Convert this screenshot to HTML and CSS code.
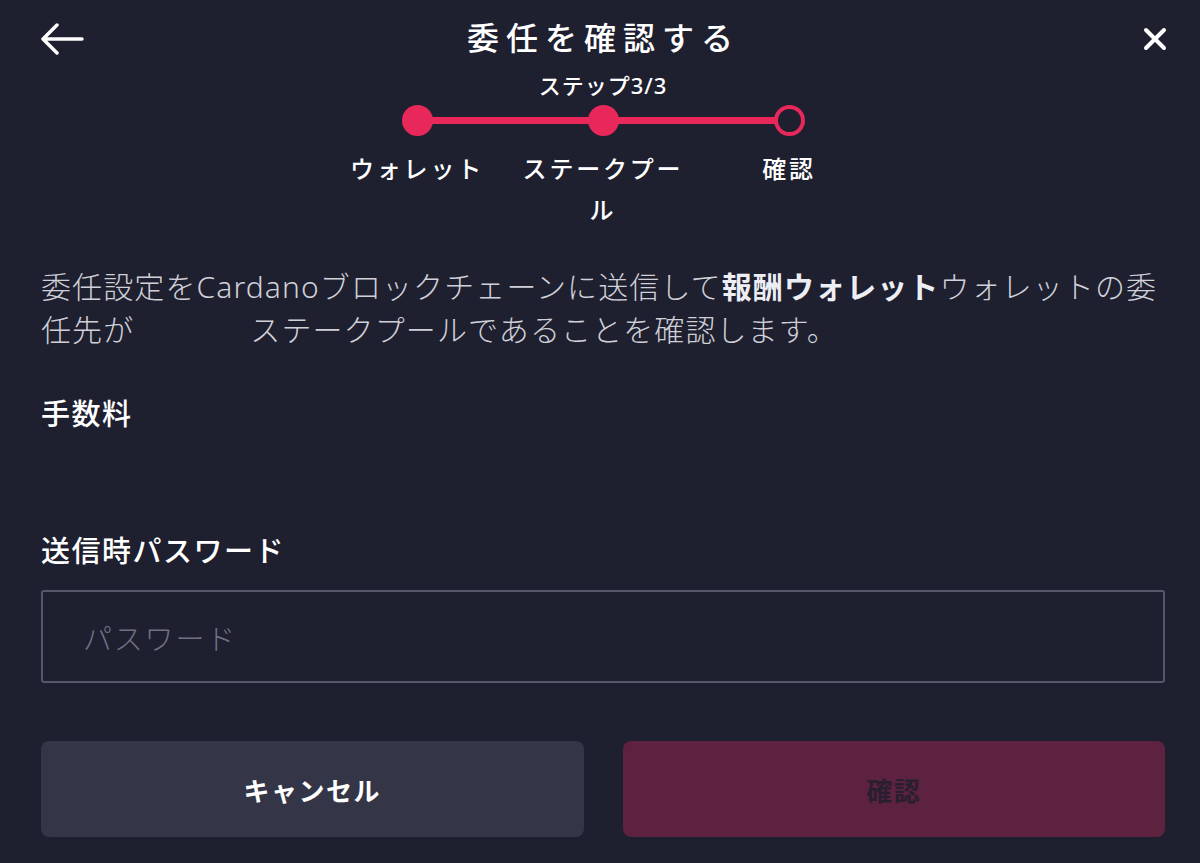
FILE: index.html
```html
<!DOCTYPE html>
<html lang="ja">

<head>
    <meta charset="UTF-8">
    <meta name="viewport" content="width=device-width, initial-scale=1.0">
    <title>委任を確認する</title>
    <link rel="stylesheet" href="styles.css">
</head>

<body>
    <div class="screen">
        <header class="topbar">
            <button class="icon-btn back" aria-label="戻る">
                <svg width="44" height="34" viewBox="0 0 44 34">
                    <path d="M41 17H2M16 3L2 17l14 14" fill="none" stroke="#fff" stroke-width="3.5"
                        stroke-linecap="round" stroke-linejoin="round" />
                </svg>
            </button>
            <h1 class="title">委任を確認する</h1>
            <button class="icon-btn close" aria-label="閉じる">
                <svg width="24" height="24" viewBox="0 0 24 24">
                    <path d="M3 3l18 18M21 3L3 21" fill="none" stroke="#fff" stroke-width="4"
                        stroke-linecap="round" />
                </svg>
            </button>
        </header>

        <div class="step-count">ステップ3/3</div>

        <!-- progress -->
        <ol class="steps">
            <li class="step done">
                <span class="dot"></span>
                <span class="step-label">ウォレット</span>
            </li>
            <li class="step done">
                <span class="dot"></span>
                <span class="step-label">ステークプール</span>
            </li>
            <li class="step current">
                <span class="dot"></span>
                <span class="step-label">確認</span>
            </li>
        </ol>

        <p class="desc">委任設定をCardanoブロックチェーンに送信して<b>報酬ウォレット</b>ウォレットの委任先が<span class="pool-name"></span>ステークプールであることを確認します。</p>

        <h2 class="field-title">手数料</h2>
        <div class="fee"></div>

        <h2 class="field-title">送信時パスワード</h2>
        <input class="password" type="password" placeholder="パスワード">

        <div class="actions">
            <button class="btn cancel">キャンセル</button>
            <button class="btn confirm" disabled>確認</button>
        </div>
    </div>
</body>

</html>
```

FILE: styles.css
```css
body {
    margin: 0;
    background: #1e1f2f;
    color: #fff;
    font-family: "Noto Sans", "Noto Sans CJK JP", sans-serif;
}

.screen {
    padding: 0 35px 0 41px;
}

.topbar {
    display: grid;
    grid-template-columns: 1fr auto 1fr;
    align-items: center;
    height: 78px;
}

.icon-btn {
    background: none;
    border: none;
    padding: 0;
    display: flex;
    cursor: pointer;
}

.back {
    justify-self: start;
}

.close {
    justify-self: end;
    margin-right: -2px;
}

.title {
    margin: 0 0 0 -6px;
    font-size: 32px;
    font-weight: 500;
    letter-spacing: 7px;
    line-height: 1;
    padding-bottom: 2px;
    padding-left: 7px;
}

.step-count {
    text-align: center;
    font-size: 22px;
    font-weight: 500;
    line-height: 26px;
    letter-spacing: 1px;
    margin-top: -6px;
}

.steps {
    list-style: none;
    padding: 0;
    margin: 7px 0 0;
    display: flex;
    justify-content: center;
}

.step {
    width: 186px;
    display: flex;
    flex-direction: column;
    align-items: center;
    position: relative;
}

.step + .step::before {
    content: "";
    position: absolute;
    top: 12px;
    left: -50%;
    width: 100%;
    height: 7px;
    background: #e8285a;
}

.dot {
    width: 31px;
    height: 31px;
    border-radius: 50%;
    background: #e8285a;
    box-sizing: border-box;
    position: relative;
}

.current .dot {
    background: #1e1f2f;
    border: 4px solid #e8285a;
}

.step-label {
    margin-top: 12px;
    font-size: 24px;
    font-weight: 500;
    letter-spacing: 2.8px;
    line-height: 41px;
    text-align: center;
    width: 170px;
}

.desc {
    margin: 35px 0 0;
    font-size: 30px;
    font-weight: 300;
    line-height: 43px;
    letter-spacing: 1.1px;
    color: #cfd0d8;
}

.desc b {
    font-weight: 700;
    color: #eceef4;
}

.pool-name {
    display: inline-block;
    width: 116px;
}

.field-title {
    margin: 0;
    font-size: 29px;
    font-weight: 500;
    line-height: 40px;
    letter-spacing: 1.5px;
}

.desc + .field-title {
    margin-top: 43px;
}

.fee {
    height: 97px;
}

.password {
    display: block;
    width: 100%;
    box-sizing: border-box;
    margin-top: 19px;
    height: 93px;
    padding: 0 40px;
    background: transparent;
    border: 2px solid #55576a;
    border-radius: 3px;
    font: 300 29px "Noto Sans CJK JP", sans-serif;
    color: #fff;
    letter-spacing: 1.8px;
}

.password::placeholder {
    color: #6f7183;
}

.actions {
    display: flex;
    gap: 39px;
    margin-top: 58px;
}

.btn {
    flex: 1;
    height: 96px;
    border: none;
    border-radius: 8px;
    font: 700 26px "Noto Sans CJK JP", sans-serif;
    letter-spacing: 1.5px;
}

.cancel {
    background: #343547;
    color: #fff;
}

.confirm {
    background: #5c2240;
    color: #2a1f30;
}
```
